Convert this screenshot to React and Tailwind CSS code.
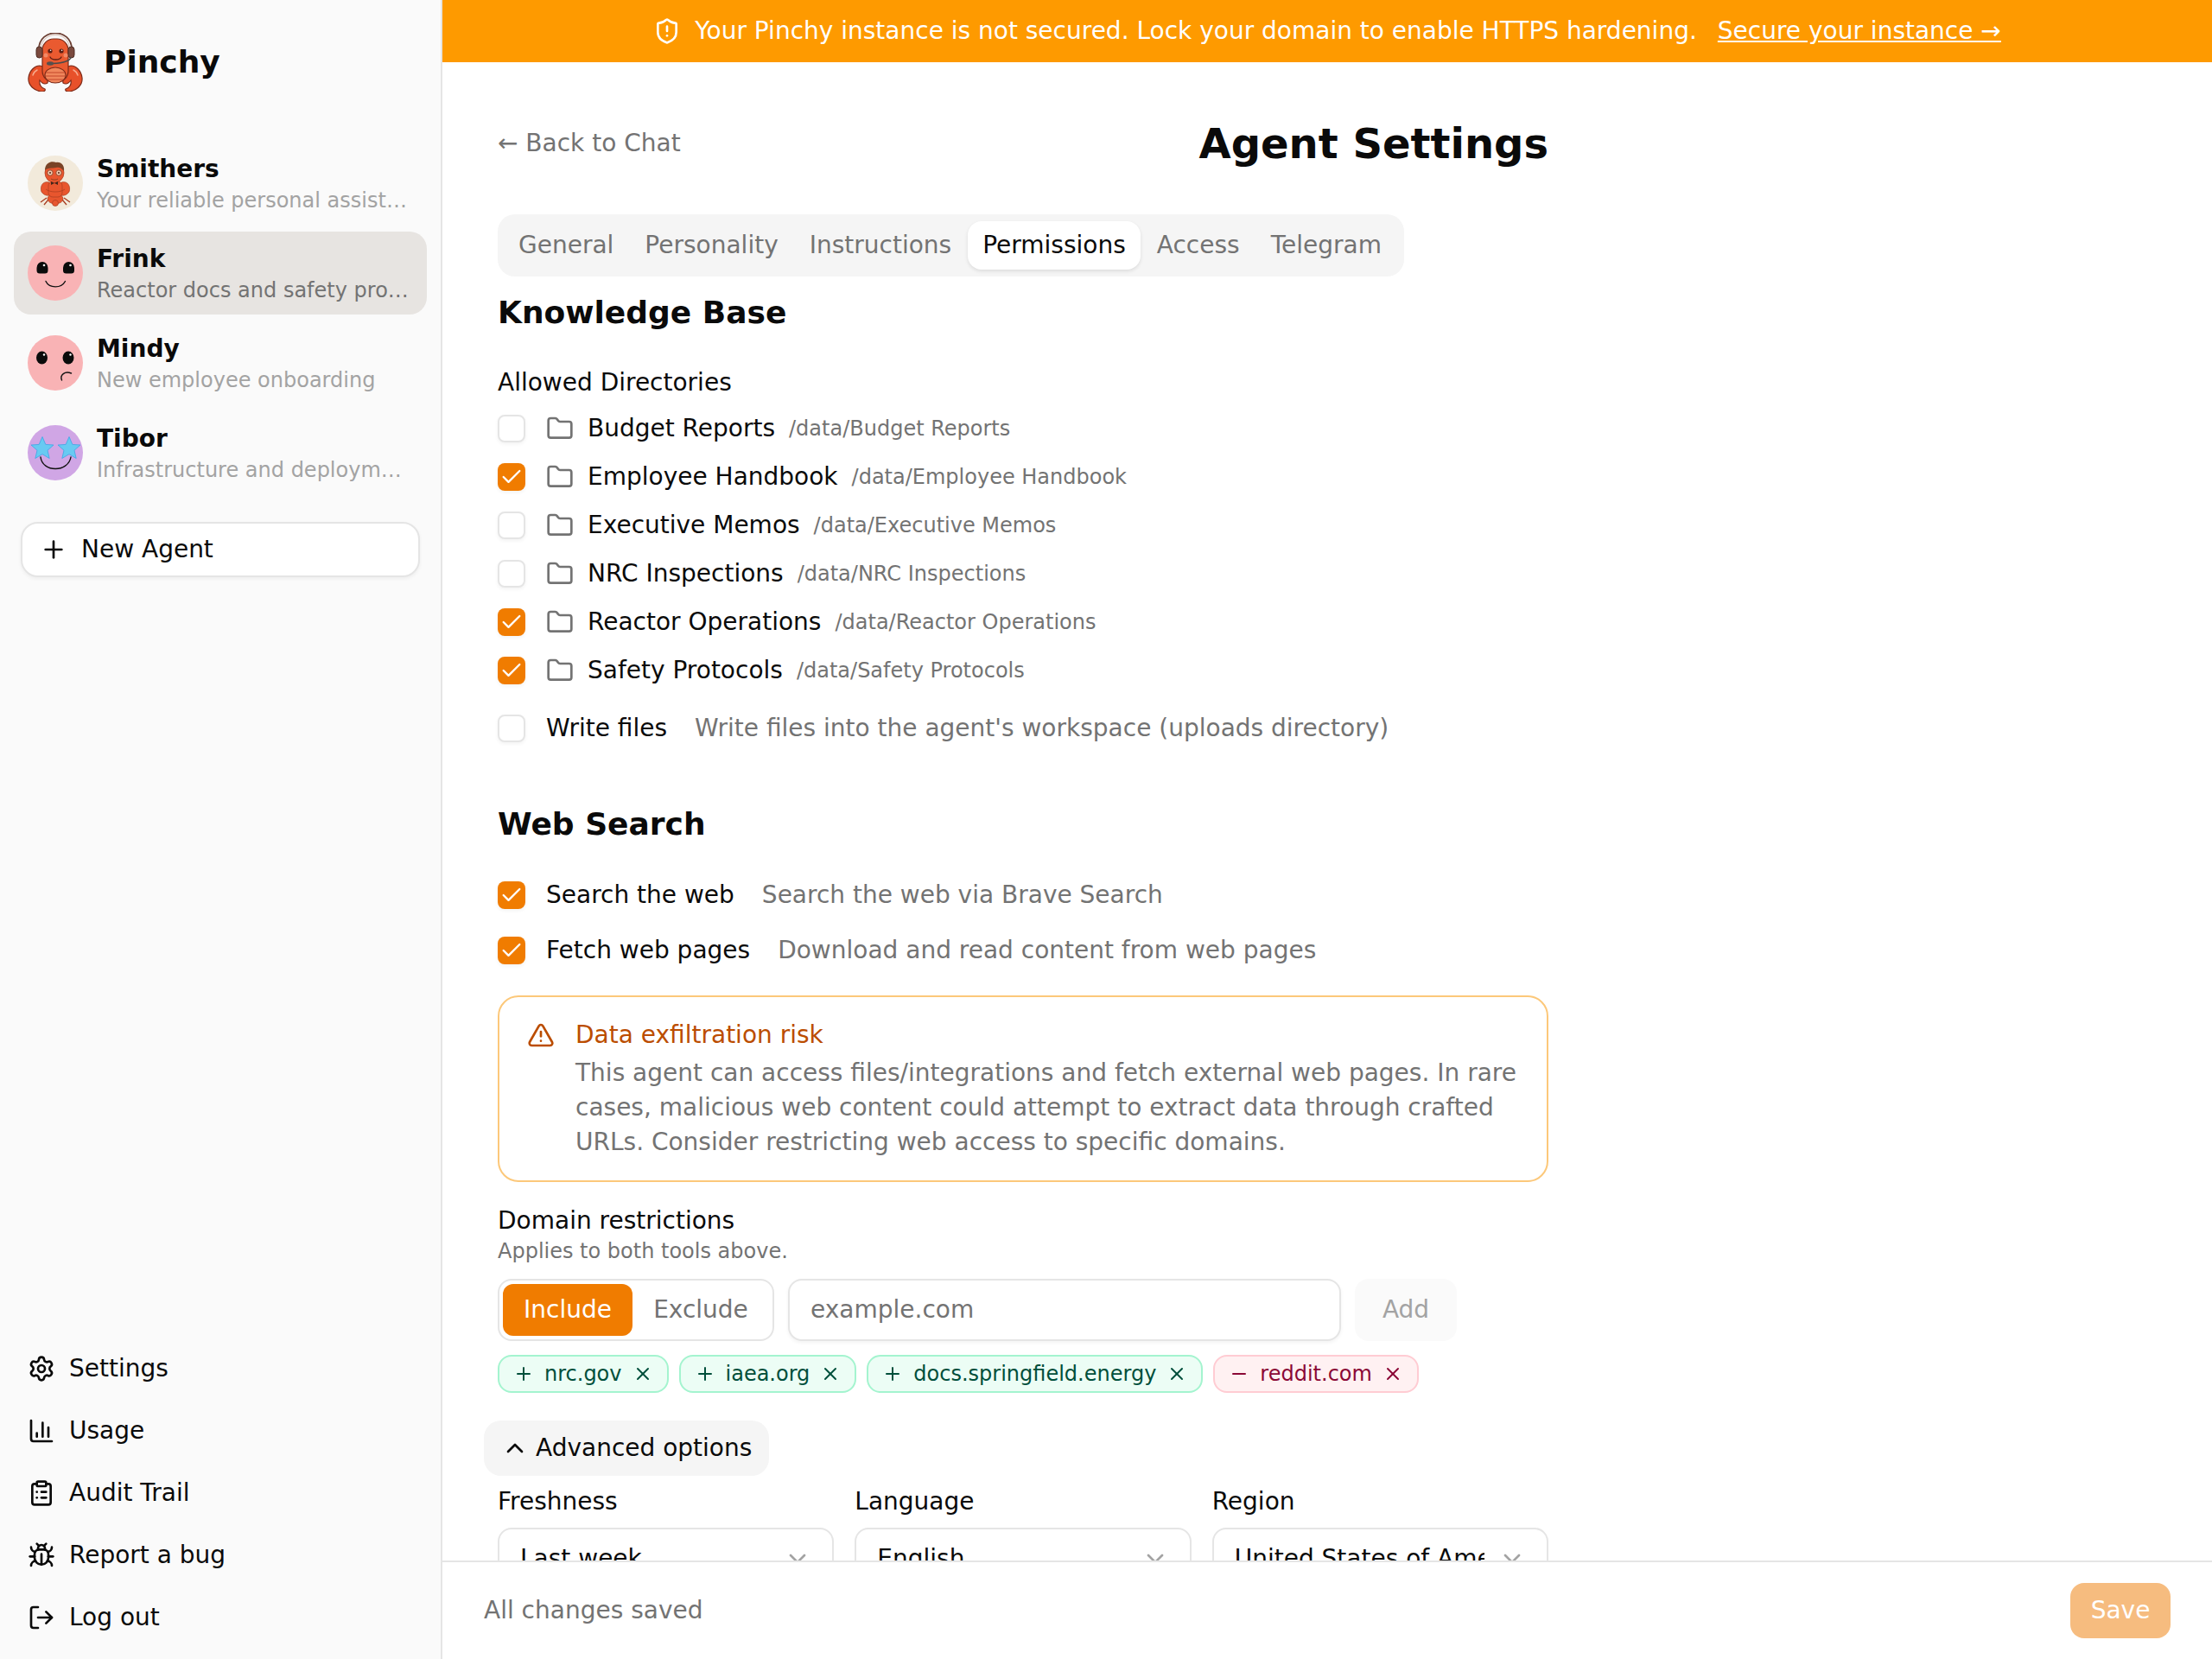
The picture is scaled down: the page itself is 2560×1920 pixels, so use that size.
import { Bug, ChartColumn, Check, ChevronDown, ChevronUp, ClipboardList, Folder, LogOut, Minus, Plus, Settings, ShieldAlert, TriangleAlert, X } from "lucide-react";

function PinchyLogo() {
  return (
    <svg viewBox="0 0 64 68" className="h-[68px] w-16 shrink-0">
      <g stroke="#7c2a18" strokeWidth="1.2">
        <path d="M14 38 C8 38 2 44 1 52 C0 61 8 67 16 68 C19 68 21 67 20 65 C16 64 13 60 14 55 C17 59 20 60 23 58 C24 52 22 47 19 44 L22 40 Z" fill="#e8512a" />
        <path d="M50 38 C56 38 62 44 63 52 C64 61 56 67 48 68 C45 68 43 67 44 65 C48 64 51 60 50 55 C47 59 44 60 41 58 C40 52 42 47 45 44 L42 40 Z" fill="#e8512a" />
        <rect x="17" y="7" width="30" height="50" rx="13" fill="#ea5a30" />
        <ellipse cx="32" cy="49" rx="12" ry="9" fill="#f0875c" />
      </g>
      <path d="M21 46 H43 M20.500 50 H43.500 M23 54 H41" stroke="#c4472a" strokeWidth="1" fill="none" />
      <path d="M6 49 C7 46 9 44 11 43" stroke="#f7a98c" strokeWidth="1.5" fill="none" strokeLinecap="round" />
      <path d="M58 49 C57 46 55 44 53 43" stroke="#f7a98c" strokeWidth="1.5" fill="none" strokeLinecap="round" />
      <path d="M13 19 C13 -6 51 -6 51 19" stroke="#6d4034" strokeWidth="1.800" fill="none" />
      <path d="M15.500 19 C15.500 -3 48.500 -3 48.500 19" stroke="#d9c4ba" strokeWidth="1.200" fill="none" />
      <rect x="10" y="16" width="7" height="13" rx="3.500" fill="#7a4a3e" stroke="#4f2d24" strokeWidth="1" />
      <rect x="47" y="16" width="7" height="13" rx="3.500" fill="#7a4a3e" stroke="#4f2d24" strokeWidth="1" />
      <path d="M50 28 C49 33 40 35 29 35.500" stroke="#4a4a4a" strokeWidth="1.400" fill="none" />
      <ellipse cx="26" cy="35.500" rx="4" ry="2.200" fill="#55504e" />
      <circle cx="26" cy="21" r="2.600" fill="#5b1f14" />
      <circle cx="39" cy="21" r="2.600" fill="#5b1f14" />
      <circle cx="26.600" cy="20.200" r="0.800" fill="#fff" />
      <circle cx="39.600" cy="20.200" r="0.800" fill="#fff" />
      <circle cx="21" cy="26" r="2.500" fill="#f28a66" />
      <circle cx="44" cy="26" r="2.500" fill="#f28a66" />
      <path d="M26 28 C28 32 37 32 39 28" stroke="#5b1f14" strokeWidth="1.300" fill="none" strokeLinecap="round" />
    </svg>
  );
}

function SmithersAvatar() {
  return (
    <svg viewBox="0 0 64 64" className="size-16 shrink-0">
      <circle cx="32" cy="32" r="32" fill="#f2eadb" />
      <g stroke="#a83c20" strokeWidth="0.700" fill="#e8562e">
        <path d="M22 49 L15 54 M24 51 L19 57 M42 49 L49 54 M40 51 L45 57" fill="none" strokeWidth="1.300" />
        <ellipse cx="32" cy="50" rx="9" ry="6" />
        <circle cx="32" cy="55" r="3.500" />
        <path d="M25 31 C17 29 14 36 16 42 C20 48 27 47 31 43 Z" />
        <path d="M39 31 C47 29 50 36 48 42 C44 48 37 47 33 43 Z" />
        <rect x="24" y="30" width="16" height="18" rx="5" />
        <path d="M21 39 C26 43 38 43 43 39" fill="none" />
        <ellipse cx="31" cy="20" rx="11" ry="11.500" />
      </g>
      <path d="M20 17 C20 7 29 6 33 8 C39 7 43 12 42 18 C39 14 36 13 33 14 C28 15 23 14 20 17 Z" fill="#7a4326" />
      <circle cx="26" cy="20" r="3.200" fill="#f3c7ac" stroke="#7c3a20" strokeWidth="0.800" />
      <circle cx="36" cy="20" r="3.200" fill="#f3c7ac" stroke="#7c3a20" strokeWidth="0.800" />
      <circle cx="26" cy="20" r="1" fill="#4a2415" />
      <circle cx="36" cy="20" r="1" fill="#4a2415" />
      <path d="M27 27 C29 28.500 33 28.500 35 27" stroke="#7c3a20" strokeWidth="0.800" fill="none" />
      <path d="M27 30 L31 32 L35 30 V34 L31 32 L27 34 Z" fill="#40241a" />
    </svg>
  );
}

function FrinkAvatar() {
  return (
    <svg viewBox="0 0 64 64" className="size-16 shrink-0">
      <circle cx="32" cy="32" r="32" fill="#f9b3b5" />
      <path d="M10.500 26 A6.500 7 0 0 1 23.500 26 V29 Q23.500 32.500 20 32.500 H14 Q10.500 32.500 10.500 29 Z" fill="#0b0b0b" />
      <path d="M41 26 A6.500 7 0 0 1 54 26 V29 Q54 32.500 50.500 32.500 H44.500 Q41 32.500 41 29 Z" fill="#0b0b0b" />
      <circle cx="19" cy="23" r="1.300" fill="#fff" />
      <circle cx="49.500" cy="23" r="1.300" fill="#fff" />
      <path d="M21 41.500 C25 50 39 50 43.500 41.500" stroke="#111" strokeWidth="1.400" fill="none" strokeLinecap="round" />
    </svg>
  );
}

function MindyAvatar() {
  return (
    <svg viewBox="0 0 64 64" className="size-16 shrink-0">
      <circle cx="32" cy="32" r="32" fill="#f9b3b5" />
      <ellipse cx="16.500" cy="26" rx="6.500" ry="7.500" fill="#0b0b0b" />
      <ellipse cx="47" cy="26" rx="6.500" ry="7.500" fill="#0b0b0b" />
      <circle cx="19" cy="22.500" r="1.200" fill="#fff" />
      <circle cx="49.500" cy="22.500" r="1.200" fill="#fff" />
      <path d="M39.500 52 C37 46 43 41 50.500 44" stroke="#111" strokeWidth="1.400" fill="none" strokeLinecap="round" />
    </svg>
  );
}

function TiborAvatar() {
  const star = "M0 -13.500 L3.800 -4.600 L13 -4 L6 2.200 L8.200 11.500 L0 6.600 L-8.200 11.500 L-6 2.200 L-13 -4 L-3.800 -4.600 Z";
  return (
    <svg viewBox="0 0 64 64" className="size-16 shrink-0">
      <circle cx="32" cy="32" r="32" fill="#d0a6e5" />
      <path d="M15 37 C17 55 47 55 50 37" stroke="#111" strokeWidth="1.400" fill="none" strokeLinecap="round" />
      <path d={star} transform="translate(17 27)" fill="#68caf2" stroke="#3ea6e6" strokeWidth="0.800" strokeLinejoin="round" />
      <path d={star} transform="translate(48 27)" fill="#68caf2" stroke="#3ea6e6" strokeWidth="0.800" strokeLinejoin="round" />
    </svg>
  );
}

const agents = [
  { name: "Smithers", desc: "Your reliable personal assistant for everything", avatar: <SmithersAvatar /> },
  { name: "Frink", desc: "Reactor docs and safety procedures", avatar: <FrinkAvatar />, active: true },
  { name: "Mindy", desc: "New employee onboarding", avatar: <MindyAvatar /> },
  { name: "Tibor", desc: "Infrastructure and deployment helper", avatar: <TiborAvatar /> },
];

const navItems = [
  ["Settings", Settings],
  ["Usage", ChartColumn],
  ["Audit Trail", ClipboardList],
  ["Report a bug", Bug],
  ["Log out", LogOut],
];

const tabs = ["General", "Personality", "Instructions", "Permissions", "Access", "Telegram"];

const directories = [
  ["Budget Reports", false],
  ["Employee Handbook", true],
  ["Executive Memos", false],
  ["NRC Inspections", false],
  ["Reactor Operations", true],
  ["Safety Protocols", true],
];

const domains = [
  ["nrc.gov", true],
  ["iaea.org", true],
  ["docs.springfield.energy", true],
  ["reddit.com", false],
];

function CheckBox({ checked }) {
  if (checked) {
    return (
      <span className="flex size-8 shrink-0 items-center justify-center rounded-lg bg-[#f07c00] shadow-[0_2px_4px_rgba(0,0,0,0.05)]">
        <Check className="size-7 text-white" />
      </span>
    );
  }
  return <span className="size-8 shrink-0 rounded-lg border-2 border-[#e5e5e5] bg-white shadow-[0_2px_4px_rgba(0,0,0,0.05)]" />;
}

function Sidebar() {
  return (
    <aside className="flex h-full w-[512px] shrink-0 flex-col border-r-2 border-[#e5e5e5] bg-[#fafafa] px-4">
      <div className="mb-[30px] flex h-[134px] items-center gap-6 px-4 pt-[10px]">
        <PinchyLogo />
        <span className="text-[36px] font-bold leading-[56px] text-[#0a0a0a]">Pinchy</span>
      </div>
      <div className="flex flex-col gap-2">
        {agents.map((a) => (
          <div key={a.name} className={`flex h-24 items-center gap-4 rounded-[20px] px-4 ${a.active ? "bg-[#e7e4e1]" : ""}`}>
            {a.avatar}
            <div className="min-w-0 flex-1">
              <div className="text-[28px] font-bold leading-10 text-[#0a0a0a]">{a.name}</div>
              <div className={`truncate text-[24px] leading-8 ${a.active ? "text-[#737373]" : "text-[#a3a3a3]"}`}>{a.desc}</div>
            </div>
          </div>
        ))}
      </div>
      <button className="mx-2 mt-8 flex h-16 items-center gap-4 rounded-[20px] border-2 border-[#e5e5e5] bg-white px-[20px] text-[28px] text-[#0a0a0a] shadow-[0_2px_4px_rgba(0,0,0,0.05)]">
        <Plus className="size-8" />
        New Agent
      </button>
      <nav className="mt-auto flex flex-col pb-3">
        {navItems.map(([label, Icon]) => (
          <div key={label} className="flex h-[72px] items-center gap-4 px-4 text-[28px] text-[#0a0a0a]">
            <Icon className="size-8" />
            {label}
          </div>
        ))}
      </nav>
    </aside>
  );
}

function ToolRow({ label, desc }) {
  return (
    <div className="flex h-10 items-center gap-6">
      <CheckBox checked={label !== "Write files"} />
      <span className="text-[28px] leading-10 text-[#0a0a0a]">{label}</span>
      <span className="ml-2 text-[28px] leading-10 text-[#737373]">{desc}</span>
    </div>
  );
}

function SelectBox({ label, value }) {
  return (
    <div>
      <div className="mb-[10px] text-[28px] leading-10 text-[#0a0a0a]">{label}</div>
      <div className="flex h-[72px] items-center gap-4 rounded-2xl border-2 border-[#e5e5e5] bg-white px-6 text-[28px] text-[#0a0a0a]">
        <span className="min-w-0 flex-1 overflow-hidden whitespace-nowrap">{value}</span>
        <ChevronDown className="size-8 shrink-0 text-[#a3a3a3]" />
      </div>
    </div>
  );
}

export default function App() {
  return (
    <div className="flex h-[1920px] w-[2560px] overflow-hidden bg-white font-['DejaVu_Sans',sans-serif] text-[#0a0a0a]">
      <Sidebar />
      <div className="flex min-w-0 flex-1 flex-col">
        <div className="flex h-[72px] shrink-0 items-center justify-center gap-6 bg-[#fe9a00] text-[28px] text-white">
          <span className="flex items-center gap-4">
            <ShieldAlert className="size-8" />
            Your Pinchy instance is not secured. Lock your domain to enable HTTPS hardening.
          </span>
          <span className="underline">Secure your instance →</span>
        </div>

        <div className="min-h-0 flex-1 overflow-hidden">
          <div className="w-[1344px] px-16 pt-[62px]">
            <div className="mb-[50px] flex h-16 items-center justify-between">
              <span className="text-[28px] leading-10 text-[#737373]">← Back to Chat</span>
              <h1 className="text-[48px] font-bold leading-16 text-[#0a0a0a]">Agent Settings</h1>
            </div>

            <div className="flex h-[72px] w-fit items-center gap-0.5 rounded-[20px] bg-[#f5f5f5] py-2 pl-[7px] pr-[9px]">
              {tabs.map((t) => (
                <div key={t} className={`flex h-14 items-center rounded-2xl px-[17px] text-[28px] ${t === "Permissions" ? "bg-white text-[#0a0a0a] shadow-[0_2px_4px_rgba(0,0,0,0.1)]" : "text-[#737373]"}`}>
                  {t}
                </div>
              ))}
            </div>

            <h2 className="mt-[14px] text-[36px] font-bold leading-14 text-[#0a0a0a]">Knowledge Base</h2>
            <div className="mt-[33px] text-[28px] leading-10 text-[#0a0a0a]">Allowed Directories</div>
            <div className="mt-[13px] flex flex-col gap-4">
              {directories.map(([name, checked]) => (
                <div key={name} className="flex h-10 items-center">
                  <CheckBox checked={checked} />
                  <Folder className="ml-6 size-8 shrink-0 text-[#737373]" />
                  <span className="ml-4 text-[28px] leading-10 text-[#0a0a0a]">{name}</span>
                  <span className="ml-4 text-[24px] leading-8 text-[#737373]">/data/{name}</span>
                </div>
              ))}
            </div>
            <div className="mt-[27px]">
              <ToolRow label="Write files" desc="Write files into the agent's workspace (uploads directory)" />
            </div>

            <h2 className="mt-[63px] text-[36px] font-bold leading-14 text-[#0a0a0a]">Web Search</h2>
            <div className="mt-[34px] flex flex-col gap-6">
              <ToolRow label="Search the web" desc="Search the web via Brave Search" />
              <ToolRow label="Fetch web pages" desc="Download and read content from web pages" />
            </div>

            <div className="mt-8 flex gap-6 rounded-3xl border-2 border-[#fcc87a] bg-white px-8 py-6">
              <TriangleAlert className="mt-1 size-8 shrink-0 text-[#bb4d00]" />
              <div>
                <div className="text-[28px] leading-10 text-[#bb4d00]">Data exfiltration risk</div>
                <p className="mt-1 text-[28px] leading-10 text-[#737373]">
                  This agent can access files/integrations and fetch external web pages. In rare cases, malicious web content could attempt to extract data through crafted URLs. Consider restricting web access to specific domains.
                </p>
              </div>
            </div>

            <div className="mt-[25px] text-[28px] leading-10 text-[#0a0a0a]">Domain restrictions</div>
            <div className="-mt-px text-[24px] leading-8 text-[#737373]">Applies to both tools above.</div>

            <div className="mt-4 flex gap-4">
              <div className="flex h-[72px] w-[320px] shrink-0 items-center rounded-2xl border-2 border-[#e5e5e5] bg-white p-1">
                <div className="flex h-[60px] w-[150px] items-center justify-center rounded-xl bg-[#f07c00] text-[28px] text-white">Include</div>
                <div className="flex h-[60px] flex-1 items-center justify-center text-[28px] text-[#737373]">Exclude</div>
              </div>
              <div className="flex h-[72px] w-[640px] items-center rounded-2xl border-2 border-[#e5e5e5] bg-white px-6 text-[28px] text-[#737373] shadow-[0_2px_4px_rgba(0,0,0,0.05)]">
                example.com
              </div>
              <div className="flex h-[72px] w-[118px] shrink-0 items-center justify-center rounded-2xl bg-[#fafafa] text-[28px] text-[#a3a3a3]">Add</div>
            </div>

            <div className="mt-4 flex gap-3">
              {domains.map(([name, included]) => {
                const Sign = included ? Plus : Minus;
                return (
                  <div key={name} className={`flex h-11 items-center gap-3 rounded-2xl border-2 px-4 text-[24px] ${included ? "border-[#a4f4cf] bg-[#ecfdf5] text-[#004f3b]" : "border-[#ffccd3] bg-[#fff1f2] text-[#8b0836]"}`}>
                    <Sign className="size-6" />
                    {name}
                    <X className="size-6" />
                  </div>
                );
              })}
            </div>

            <div className="-ml-4 mt-8 flex h-16 w-fit items-center gap-2 rounded-[20px] bg-[#f5f5f5] px-5 text-[28px] text-[#0a0a0a]">
              <ChevronUp className="size-8" />
              Advanced options
            </div>

            <div className="mt-[10px] grid grid-cols-3 gap-6">
              <SelectBox label="Freshness" value="Last week" />
              <SelectBox label="Language" value="English" />
              <SelectBox label="Region" value="United States of America" />
            </div>
          </div>
        </div>

        <div className="flex shrink-0 items-center justify-between border-t-2 border-[#e5e5e5] bg-white px-12 py-6">
          <span className="text-[28px] leading-10 text-[#737373]">All changes saved</span>
          <button className="flex h-16 w-[116px] items-center justify-center rounded-2xl bg-[#f6bc7f] text-[28px] text-white">Save</button>
        </div>
      </div>
    </div>
  );
}
